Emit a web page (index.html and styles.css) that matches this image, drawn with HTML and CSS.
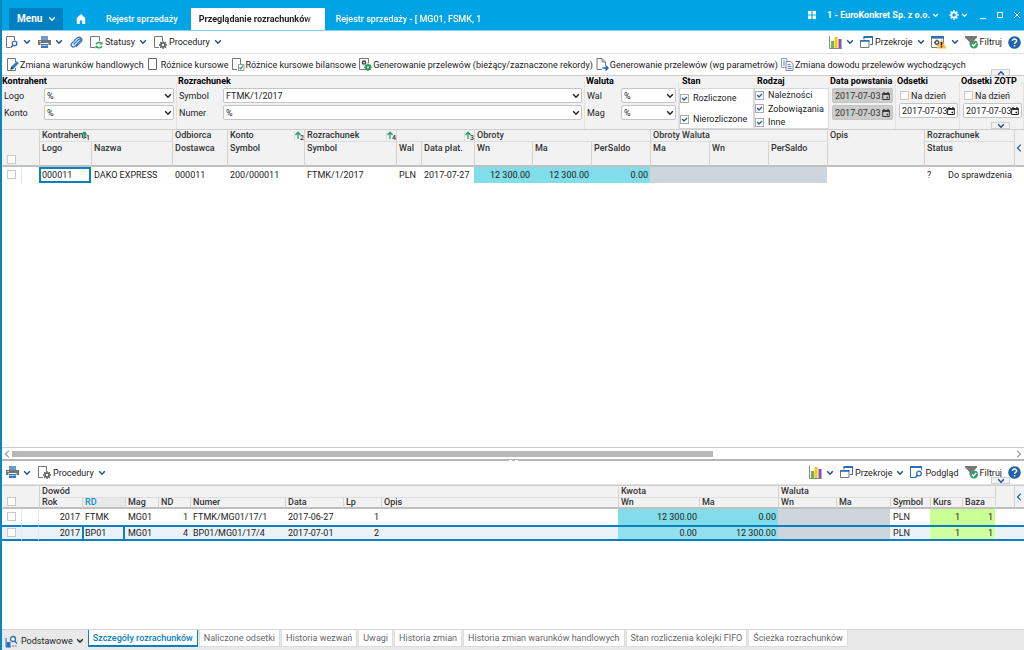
FILE: index.html
```html
<!DOCTYPE html>
<html lang="pl">
<head>
<meta charset="utf-8">
<title>Przeglądanie rozrachunków</title>
<link rel="stylesheet" href="styles.css">
</head>
<body>
<svg class="sprite" aria-hidden="true">
  <symbol id="chev" viewBox="0 0 8 6"><path d="M1.200 1.200 4 4.200 6.800 1.200" fill="none" stroke="currentColor" stroke-width="1.400"/></symbol>
  <symbol id="home" viewBox="0 0 10 10"><path d="M5 0 .8 4v6h3V6.500h2.400V10h3V4z" fill="currentColor"/></symbol>
  <symbol id="apps" viewBox="0 0 8 8"><path d="M0 0h3.400v3.400H0zM4.600 0H8v3.400H4.600zM0 4.600h3.400V8H0zM4.600 4.600H8V8H4.600z" fill="currentColor"/></symbol>
  <symbol id="gear" viewBox="0 0 10 10"><circle cx="5" cy="5" r="2.600" fill="none" stroke="currentColor" stroke-width="1.700"/><path d="M5 .3v1.500M5 8.200v1.500M.3 5h1.500M8.200 5h1.500M1.700 1.700l1 1M7.300 7.300l1 1M8.300 1.700l-1 1M2.700 7.300l-1 1" stroke="currentColor" stroke-width="1.700"/></symbol>
  <symbol id="page" viewBox="0 0 13 13"><path d="M1.500.5h8v11h-8z" fill="#fff" stroke="#666"/></symbol>
  <symbol id="preview" viewBox="0 0 13 13"><path d="M4.500 11.500h-4V.5h8V4" fill="#fff" stroke="#777"/><circle cx="8.500" cy="7.500" r="2.300" fill="#fff" stroke="#2a6db5" stroke-width="1.300"/><path d="M7 9.200 4.800 11.500" stroke="#2a6db5" stroke-width="1.600"/></symbol>
  <symbol id="printer" viewBox="0 0 13 13"><path d="M3 0h7v4H3z" fill="#6d9bd0"/><path d="M0 4h13v5H0z" fill="#707478"/><path d="M1.500 5h1.300v1H1.500z" fill="#fff"/><path d="M2.500 7h8v5h-8z" fill="#fff"/><path d="M3 8h7v4H3z" fill="#3e78bb"/><path d="M3.500 9.500h6" stroke="#a8c4e2"/></symbol>
  <symbol id="clip" viewBox="0 0 13 13"><path d="m3.500 8.500 5-5c1.300-1.200 2.600.2 1.500 1.300L4.800 10.300C2.800 12.200-.2 9.500 1.700 7.400l5.200-5.200C9.800-.5 13.500 3 11 5.800L6 10.900" fill="none" stroke="#2d6fb6" stroke-width="1.200"/></symbol>
  <symbol id="status" viewBox="0 0 13 13"><path d="M5 11.500H.5V.5h9V5" fill="#fff" stroke="#777"/><path d="M6 8.300C7 6 10 6 11.300 7.500M12 10c-1 2.400-4 2.400-5.500.8" fill="none" stroke="#2aa065" stroke-width="1.400"/><path d="M12.500 5.500v3h-3zM5.500 12.800v-3h3z" fill="#2aa065"/></symbol>
  <symbol id="proc" viewBox="0 0 13 13"><path d="M5 11.500H.5V.5h8V5" fill="#fff" stroke="#777"/><circle cx="9" cy="9" r="2" fill="#fff" stroke="#555" stroke-width="1.500"/><path d="M9 5v1.400M9 11.600V13M5 9h1.400M11.600 9H13M6.200 6.200l1 1M10.800 10.800l1 1M11.800 6.200l-1 1M7.200 10.800l-1 1" stroke="#555" stroke-width="1.300"/></symbol>
  <symbol id="pencil" viewBox="0 0 13 13"><path d="M9.500 10v2.500h-8V.5h8V4" fill="#fff" stroke="#777"/><path d="m4.500 11.500.6-2.800 5.700-5.500 2 2-5.600 5.700z" fill="#2d79c7"/><path d="m4.500 11.500.6-2.800 2.100 2.200z" fill="#234"/></symbol>
  <symbol id="pagecheck" viewBox="0 0 13 13"><path d="M5 11.500H.5V.5h8V6" fill="#fff" stroke="#777"/><path d="M6.500 6.500h5.500v6H6.500z" fill="#fff" stroke="#999"/><path d="m7.500 9.500 1.300 1.300 2.200-3" fill="none" stroke="#2aa065" stroke-width="1.300"/></symbol>
  <symbol id="gen" viewBox="0 0 13 13"><path d="M6 11.500H.5V.5h9V5" fill="#f7f7f7" stroke="#777"/><circle cx="5" cy="4.500" r="1.600" fill="#fff" stroke="#444" stroke-width="1.500"/><circle cx="9" cy="9.300" r="2" fill="#fff" stroke="#2a9a62" stroke-width="2"/><path d="M9 5.500v1.500M9 11.500v1.500M5.200 9.300h1.500M11.300 9.300h1.500M6.400 6.700l1 1M10.600 10.900l1 1M11.600 6.700l-1 1M7.400 10.900l-1 1" stroke="#2a9a62" stroke-width="1.400"/></symbol>
  <symbol id="export" viewBox="0 0 13 13"><path d="M6 11.500H1V.5h5L9.500 4v3M6 .5V4h3.500" fill="#fff" stroke="#777"/><path d="M6.500 10h5M9.500 7.500l2.500 2.500-2.500 2.500" fill="none" stroke="#1f62b5" stroke-width="1.400"/></symbol>
  <symbol id="copy" viewBox="0 0 13 13"><path d="M.5.500h5.500v9H.5z" fill="#fff" stroke="#99a"/><path d="M5 3.500h4.500l2.500 2v7H5z" fill="#fff" stroke="#889"/><path d="M2 3h2M2 5h2M2 7h2M6.500 6.500h3M6.500 8.500h4M6.500 10.500h4" stroke="#5a90cc"/></symbol>
  <symbol id="chart" viewBox="0 0 13 13"><path d="M.5 0v12.500H13" fill="none" stroke="#888"/><path d="M2 5h3v7H2z" fill="#6db35a"/><path d="M5.500 1h3v11h-3z" fill="#fdc20a"/><path d="M9.500 3h3v9h-3z" fill="#8252b5"/></symbol>
  <symbol id="sections" viewBox="0 0 13 13"><path d="M4 3.500V1h8.500v7.500H10" fill="#fff" stroke="#2d6fb6"/><path d="M3.500 1h9.500" stroke="#2d6fb6" stroke-width="2"/><path d="M.5 4.500h8.500v7H.5z" fill="#fff" stroke="#777"/><path d="M0 5h9.500" stroke="#2d6fb6" stroke-width="1.600"/></symbol>
  <symbol id="warn" viewBox="0 0 16 13"><path d="M.5.500h12v11H.5z" fill="#fff" stroke="#777"/><path d="M0 1.300h13" stroke="#2d6fb6" stroke-width="2.600"/><circle cx="6" cy="6.500" r="1.800" fill="#fff" stroke="#555" stroke-width="1.400"/><path d="M6 3.500v1M6 8.500v1M3 6.500h1" stroke="#555"/><path d="m10.500 3 5 9.500H5.500z" fill="#f8bd4c"/><path d="M10.500 6v3.500M10.500 10.300v1.200" stroke="#222" stroke-width="1.500"/></symbol>
  <symbol id="funnel" viewBox="0 0 13 13"><path d="M0 0h12v1.500L7.500 6v5L4.500 9V6L0 1.500z" fill="#777"/><circle cx="9" cy="8.500" r="3.900" fill="#3a9b6d"/><path d="m7 8.500 1.500 1.500L11.200 7" fill="none" stroke="#fff" stroke-width="1.300"/></symbol>
  <symbol id="look" viewBox="0 0 13 13"><path d="M5 11.500H.5V.5h11V4" fill="#fff" stroke="#2d6fb6"/><path d="M0 1.200h12" stroke="#2d6fb6" stroke-width="1.600"/><circle cx="9" cy="7.500" r="2.300" fill="#fff" stroke="#2d6fb6" stroke-width="1.300"/><path d="M7.400 9.200 5.300 11.600" stroke="#2d6fb6" stroke-width="1.600"/></symbol>
  <symbol id="help" viewBox="0 0 13 13"><circle cx="6.500" cy="6.500" r="6.300" fill="#1f62ad"/><path d="M4.400 5c0-2.700 4.300-2.500 4.200-.1 0 1.400-2 1.300-2 3M6.500 9v1.500" fill="none" stroke="#fff" stroke-width="1.500"/></symbol>
  <symbol id="cal" viewBox="0 0 8 8"><path d="M.7 1.500h6.600v6H.7z" fill="none" stroke="currentColor"/><path d="M.5 2.200h7" stroke="currentColor" stroke-width="1.400"/><path d="M2 0v2M6 0v2M4.500 5.500H6" stroke="currentColor" stroke-width="1.300"/></symbol>
  <symbol id="sort" viewBox="0 0 6 8"><path d="M3 8V1.500M.5 4 3 1.300 5.500 4" fill="none" stroke="#22a06b" stroke-width="1.300"/></symbol>
  <symbol id="base" viewBox="0 0 12 13"><path d="M.5 3v9h5" fill="none" stroke="#2d6fb6"/><path d="M1 7h4v5H1z" fill="#2d6fb6"/><path d="M6.500 10h2v2h-2zM9.500 10h1.500v2H9.500z" fill="#aaa"/><circle cx="7.500" cy="4" r="2.500" fill="#fff" stroke="#2d6fb6" stroke-width="1.300"/><path d="m9 6 2.500 2.500" stroke="#2d6fb6" stroke-width="1.400"/></symbol>
  <symbol id="left" viewBox="0 0 6 8"><path d="M4.800.7 1.500 4l3.300 3.300" fill="none" stroke="currentColor" stroke-width="1.200"/></symbol>
</svg>

<div class="app">
  <header class="topbar">
    <nav class="tabs">
      <button class="menu">Menu <svg class="chev"><use href="#chev"/></svg></button>
      <a class="home" href="#" aria-label="Start"><svg class="ic10"><use href="#home"/></svg></a>
      <a class="tab" href="#">Rejestr sprzedaży</a>
      <a class="tab current" href="#"><span class="fade">Przeglądanie rozrachunków</span></a>
      <a class="tab last" href="#"><span class="fade">Rejestr sprzedaży - [ MG01, FSMK, 1</span></a>
    </nav>
    <div class="account">
      <button class="plain" aria-label="Aplikacje"><svg class="ic8"><use href="#apps"/></svg></button>
      <button class="plain company">1 - EuroKonkret Sp. z o.o. <svg class="chev-s"><use href="#chev"/></svg></button>
      <button class="plain gear" aria-label="Ustawienia"><svg class="ic10"><use href="#gear"/></svg><svg class="chev-s"><use href="#chev"/></svg></button>
      <div class="window">
        <button class="plain" aria-label="Minimalizuj"><svg class="ic8" viewBox="0 0 8 8"><path d="M1 7.500h6" stroke="#fff"/></svg></button>
        <button class="plain" aria-label="Maksymalizuj"><svg class="ic8" viewBox="0 0 8 8"><path d="M1.500 1.500h5v5h-5z" fill="none" stroke="#fff"/></svg></button>
        <button class="plain" aria-label="Zamknij"><svg class="ic8" viewBox="0 0 8 8"><path d="m1 1 6 6M7 1 1 7" stroke="#fff"/></svg></button>
      </div>
    </div>
  </header>

  <div class="toolbar">
    <button class="tool"><svg class="ic"><use href="#preview"/></svg><svg class="chev gap"><use href="#chev"/></svg></button>
    <button class="tool"><svg class="ic"><use href="#printer"/></svg><svg class="chev gap"><use href="#chev"/></svg></button>
    <button class="tool" aria-label="Załączniki"><svg class="ic"><use href="#clip"/></svg></button>
    <button class="tool"><svg class="ic"><use href="#status"/></svg>Statusy<svg class="chev"><use href="#chev"/></svg></button>
    <button class="tool"><svg class="ic"><use href="#proc"/></svg>Procedury<svg class="chev"><use href="#chev"/></svg></button>
    <div class="right">
      <button class="tool"><svg class="ic"><use href="#chart"/></svg><svg class="chev"><use href="#chev"/></svg></button>
      <button class="tool"><svg class="ic"><use href="#sections"/></svg>Przekroje<svg class="chev"><use href="#chev"/></svg></button>
      <button class="tool"><svg class="ic16"><use href="#warn"/></svg><svg class="chev gap"><use href="#chev"/></svg></button>
      <button class="tool"><svg class="ic"><use href="#funnel"/></svg>Filtruj</button>
      <button class="tool" aria-label="Pomoc"><svg class="ic"><use href="#help"/></svg></button>
    </div>
  </div>

  <div class="toolbar actions">
    <button class="tool"><svg class="ic"><use href="#pencil"/></svg>Zmiana warunków handlowych</button>
    <button class="tool"><svg class="ic"><use href="#page"/></svg>Różnice kursowe</button>
    <button class="tool"><svg class="ic"><use href="#pagecheck"/></svg>Różnice kursowe bilansowe</button>
    <button class="tool"><svg class="ic"><use href="#gen"/></svg>Generowanie przelewów (bieżący/zaznaczone rekordy)</button>
    <button class="tool"><svg class="ic"><use href="#export"/></svg>Generowanie przelewów (wg parametrów)</button>
    <button class="tool"><svg class="ic"><use href="#copy"/></svg>Zmiana dowodu przelewów wychodzących</button>
  </div>

  <form class="filters">
    <button type="button" class="fold up" aria-label="Zwiń pasek"><svg class="chev"><use href="#chev"/></svg></button>
    <button type="button" class="fold down" aria-label="Rozwiń filtry"><svg class="chev"><use href="#chev"/></svg></button>
    <fieldset class="group kontrahent">
      <legend>Kontrahent</legend>
      <div class="field"><label for="logo">Logo</label><select id="logo"><option>%</option></select></div>
      <div class="field"><label for="konto">Konto</label><select id="konto"><option>%</option></select></div>
    </fieldset>
    <fieldset class="group rozrachunek">
      <legend>Rozrachunek</legend>
      <div class="field"><label for="symbol">Symbol</label><select id="symbol"><option>FTMK/1/2017</option></select></div>
      <div class="field"><label for="numer">Numer</label><select id="numer"><option>%</option></select></div>
    </fieldset>
    <fieldset class="group waluta">
      <legend>Waluta</legend>
      <div class="field"><label for="wal">Wal</label><select id="wal"><option>%</option></select></div>
      <div class="field"><label for="mag">Mag</label><select id="mag"><option>%</option></select></div>
    </fieldset>
    <fieldset class="group checks">
      <legend>Stan</legend>
      <div class="box roomy">
        <label><input type="checkbox" checked>Rozliczone</label>
        <label><input type="checkbox" checked>Nierozliczone</label>
      </div>
    </fieldset>
    <fieldset class="group checks">
      <legend>Rodzaj</legend>
      <div class="box">
        <label><input type="checkbox" checked>Należności</label>
        <label><input type="checkbox" checked>Zobowiązania</label>
        <label><input type="checkbox" checked>Inne</label>
      </div>
    </fieldset>
    <fieldset class="group powstanie">
      <legend>Data powstania</legend>
      <div class="date off"><input type="text" aria-label="Data od" value="2017-07-03" disabled><svg class="ic8"><use href="#cal"/></svg></div>
      <div class="date off"><input type="text" aria-label="Data do" value="2017-07-03" disabled><svg class="ic8"><use href="#cal"/></svg></div>
    </fieldset>
    <fieldset class="group odsetki">
      <legend>Odsetki</legend>
      <label class="day"><input type="checkbox">Na dzień</label>
      <div class="date"><input type="text" aria-label="Odsetki na dzień" value="2017-07-03"><svg class="ic8"><use href="#cal"/></svg></div>
    </fieldset>
    <fieldset class="group odsetki">
      <legend>Odsetki ZOTP</legend>
      <label class="day"><input type="checkbox">Na dzień</label>
      <div class="date"><input type="text" aria-label="Odsetki ZOTP na dzień" value="2017-07-03"><svg class="ic8"><use href="#cal"/></svg></div>
    </fieldset>
  </form>

  <main class="pane main-pane">
    <table class="grid main-grid">
      <colgroup><col class="w20"><col class="w17"><col class="w52"><col class="w81"><col class="w55"><col class="w77"><col class="w92"><col class="w25"><col class="w53"><col class="w58"><col class="w59"><col class="w59"><col class="w59"><col class="w59"><col class="w59"><col><col class="w21"><col class="w69"><col class="w10"></colgroup>
      <thead>
        <tr>
          <th colspan="2" rowspan="2" class="pick"><input type="checkbox" aria-label="Zaznacz wszystkie"></th>
          <th colspan="2"><div class="head first">Kontrahent<span class="sort"><svg><use href="#sort"/></svg><sub>1</sub></span></div></th>
          <th>Odbiorca</th>
          <th><div class="head">Konto<span class="sort"><svg><use href="#sort"/></svg><sub>2</sub></span></div></th>
          <th><div class="head">Rozrachunek<span class="sort"><svg><use href="#sort"/></svg><sub>4</sub></span></div></th>
          <th colspan="2"><div class="head"><span class="sort"><svg><use href="#sort"/></svg><sub>3</sub></span></div></th>
          <th colspan="3">Obroty</th>
          <th colspan="3">Obroty Waluta</th>
          <th>Opis</th>
          <th colspan="2">Rozrachunek</th>
          <th rowspan="2" class="more"><svg class="left"><use href="#left"/></svg></th>
        </tr>
        <tr>
          <th>Logo</th><th>Nazwa</th><th class="joined">Dostawca</th><th class="joined">Symbol</th><th>Symbol</th><th>Wal</th><th>Data płat.</th><th>Wn</th><th>Ma</th><th>PerSaldo</th><th>Ma</th><th>Wn</th><th>PerSaldo</th><th class="joined"></th><th colspan="2">Status</th>
        </tr>
      </thead>
      <tbody>
        <tr>
          <td class="pick line"><input type="checkbox" aria-label="Zaznacz 000011"></td><td></td><td class="focus">000011</td><td>DAKO EXPRESS</td><td>000011</td><td>200/000011</td><td>FTMK/1/2017</td><td>PLN</td><td>2017-07-27</td><td class="num cyan">12 300.00</td><td class="num cyan">12 300.00</td><td class="num cyan">0.00</td><td class="gray"></td><td class="gray"></td><td class="gray"></td><td></td><td>?</td><td>Do sprawdzenia</td><td></td>
        </tr>
      </tbody>
    </table>
  </main>
  <div class="scroll"><svg class="left"><use href="#left"/></svg><div class="track"><div class="thumb"></div></div><svg class="left flip"><use href="#left"/></svg></div>
  <div class="splitter"><span></span></div>

  <div class="toolbar lower">
    <button class="tool"><svg class="ic"><use href="#printer"/></svg><svg class="chev gap"><use href="#chev"/></svg></button>
    <button class="tool"><svg class="ic"><use href="#proc"/></svg>Procedury<svg class="chev"><use href="#chev"/></svg></button>
    <div class="right">
      <button class="tool"><svg class="ic"><use href="#chart"/></svg><svg class="chev"><use href="#chev"/></svg></button>
      <button class="tool"><svg class="ic"><use href="#sections"/></svg>Przekroje<svg class="chev"><use href="#chev"/></svg></button>
      <button class="tool"><svg class="ic"><use href="#look"/></svg>Podgląd</button>
      <button class="tool"><svg class="ic"><use href="#funnel"/></svg>Filtruj</button>
      <button class="tool" aria-label="Pomoc"><svg class="ic"><use href="#help"/></svg></button>
    </div>
    <button class="fold down" aria-label="Rozwiń"><svg class="chev"><use href="#chev"/></svg></button>
  </div>

  <section class="pane detail-pane">
    <table class="grid detail">
      <colgroup><col class="w20"><col class="w17"><col class="w43"><col class="w43"><col class="w33"><col class="w32"><col class="w95"><col class="w58"><col class="w38"><col><col class="w81"><col class="w79"><col class="w58"><col class="w54"><col class="w40"><col class="w32"><col class="w33"><col class="w19"><col class="w10"></colgroup>
      <thead>
        <tr>
          <th colspan="2" rowspan="2" class="pick"><input type="checkbox" aria-label="Zaznacz wszystkie"></th>
          <th colspan="8">Dowód</th><th colspan="2">Kwota</th><th colspan="5">Waluta</th><th rowspan="2"></th>
          <th rowspan="2" class="more"><svg class="left"><use href="#left"/></svg></th>
        </tr>
        <tr>
          <th>Rok</th><th class="blue">RD</th><th>Mag</th><th>ND</th><th>Numer</th><th>Data</th><th>Lp</th><th>Opis</th><th>Wn</th><th>Ma</th><th>Wn</th><th>Ma</th><th>Symbol</th><th>Kurs</th><th>Baza</th>
        </tr>
      </thead>
      <tbody>
        <tr>
          <td class="pick line"><input type="checkbox" aria-label="Zaznacz FTMK"></td><td class="line"></td><td class="num">2017</td><td>FTMK</td><td>MG01</td><td class="num">1</td><td>FTMK/MG01/17/1</td><td>2017-06-27</td><td class="num">1</td><td></td><td class="num cyan">12 300.00</td><td class="num cyan">0.00</td><td class="gray"></td><td class="gray"></td><td>PLN</td><td class="num green">1</td><td class="num green">1</td><td></td><td></td>
        </tr>
        <tr class="active">
          <td class="pick line"><input type="checkbox" aria-label="Zaznacz BP01"></td><td class="line"></td><td class="num">2017</td><td class="focus">BP01</td><td>MG01</td><td class="num">4</td><td>BP01/MG01/17/4</td><td>2017-07-01</td><td class="num">2</td><td></td><td class="num cyan">0.00</td><td class="num cyan">12 300.00</td><td class="gray"></td><td class="gray"></td><td>PLN</td><td class="num green">1</td><td class="num green">1</td><td></td><td></td>
        </tr>
      </tbody>
    </table>
  </section>

  <footer class="bottom">
    <button class="view"><svg class="ic"><use href="#base"/></svg>Podstawowe <svg class="chev"><use href="#chev"/></svg></button>
    <button class="sheet on">Szczegóły rozrachunków</button>
    <button class="sheet">Naliczone odsetki</button>
    <button class="sheet">Historia wezwań</button>
    <button class="sheet">Uwagi</button>
    <button class="sheet">Historia zmian</button>
    <button class="sheet">Historia zmian warunków handlowych</button>
    <button class="sheet">Stan rozliczenia kolejki FIFO</button>
    <button class="sheet">Ścieżka rozrachunków</button>
  </footer>
</div>
</body>
</html>
```
FILE: styles.css
```css
* { box-sizing: border-box; }
body { margin: 0; font: 9px/12px Roboto, "Noto Sans", sans-serif; color: #222; background: #fff; }
button, input, select { font: inherit; color: inherit; margin: 0; }
button { border: 0; background: none; padding: 0; cursor: pointer; white-space: nowrap; }
a { color: inherit; text-decoration: none; }
svg { flex: none; display: block; }
.sprite { position: absolute; width: 0; height: 0; }
.app { min-height: 100vh; display: flex; flex-direction: column; border-left: 2px solid #0a86bd; }

.ic { width: 13px; height: 13px; }
.ic16 { width: 16px; height: 13px; }
.ic10 { width: 10px; height: 10px; }
.ic8 { width: 8px; height: 8px; }
.chev { width: 8px; height: 6px; color: #1d4f91; }
.chev-s { width: 7px; height: 5px; }
.chev.gap { margin-left: 2px; }
.left { width: 6px; height: 8px; color: #1d5f9f; }
.flip { transform: scaleX(-1); }

/* title bar */
.topbar { display: flex; justify-content: space-between; height: 31px; background: #00a4e4; color: #fff; border-bottom: 1px solid #7fd0f0; }
.tabs { display: flex; align-items: flex-end; padding-left: 7px; }
.menu { display: flex; align-items: center; gap: 6px; height: 22px; width: 54px; padding: 0 8px; background: #0080c2; font-size: 10px; font-weight: 700; }
.menu .chev { color: #fff; }
.home { display: flex; align-items: center; height: 22px; padding: 0 20px 0 13px; }
.tab { height: 22px; line-height: 22px; padding: 0 13px 0 0; font-weight: 500; white-space: nowrap; }
.tab.current { width: 134px; padding: 0 8px; background: #fff; color: #222; font-weight: 700; }
.tab.last { width: 170px; padding-left: 11px; }
.fade { display: block; overflow: hidden; mask-image: linear-gradient(to left, transparent, #000 12px); }
.tab.last .fade { width: 154px; }
.account { display: flex; align-items: center; font-weight: 700; }
.plain { display: flex; align-items: center; gap: 2px; font-weight: 700; }
.company { margin-left: 11px; }
.gear { margin-left: 10px; }
.window { display: flex; align-items: center; gap: 9px; height: 100%; margin-left: 5px; padding: 0 3px 0 5px; border-left: 1px solid #1499d2; }

/* toolbars */
.toolbar { position: relative; display: flex; align-items: center; gap: 7px; height: 23px; padding: 0 3px 0 4px; border-bottom: 1px solid #e2e2e2; }
.tool { display: flex; align-items: center; gap: 2px; }
.tool .chev { margin-left: 2px; }
.right { display: flex; gap: 6px; margin-left: auto; }
.actions { gap: 3px; height: 22px; border-bottom: 1px solid #ccc; }
.actions .tool { gap: 1px; }
.lower { height: 24px; }

.fold { position: absolute; right: 14px; display: grid; place-items: center; width: 19px; height: 7px; background: #f2f2f2; border: 1px solid #d0d0d0; z-index: 1; }
.fold.down { bottom: 0; }
.fold.up { top: -7px; }
.fold.up .chev { transform: rotate(180deg); }

/* filters */
.filters { position: relative; display: flex; height: 53px; background: #f2f2f2; }
.group { border: 0; margin: 0; padding: 0; min-width: 0; border-right: 1px solid #e2e2e2; }
.group legend { padding: 0 0 0 1px; height: 12px; line-height: 11px; font-weight: 700; white-space: nowrap; color: #000; }
.kontrahent { flex: 0 0 175px; }
.rozrachunek { flex: 1; }
.waluta { flex: 0 0 94px; }
.group.kontrahent legend { padding-left: 0; }
.kontrahent label { width: 42px; }
.rozrachunek label { width: 46px; }
.waluta label { width: 36px; }
.field { display: flex; align-items: center; padding: 0 2px 0 0; margin-bottom: 2px; }
.field label { flex: none; padding-left: 2px; }
select { flex: 1; min-width: 0; height: 15px; padding: 0 2px; border: 1px solid #c4c4c4; border-radius: 2px; appearance: none; background: #fff url("data:image/svg+xml,%3Csvg xmlns='http://www.w3.org/2000/svg' viewBox='0 0 8 6'%3E%3Cpath d='M1.200 1.200 4 4.200 6.800 1.200' fill='none' stroke='%23222' stroke-width='1.400'/%3E%3C/svg%3E") right 1px center / 8px 6px no-repeat; }
.checks { flex: 0 0 75px; border: 0; }
.group.checks legend { padding-left: 3px; }
.box { display: flex; flex-direction: column; justify-content: space-between; height: 41px; background: #fff; border: 1px solid #d8d8d8; }
.roomy { padding: 3px 0; }
.box label, .day { display: flex; align-items: center; gap: 4px; white-space: nowrap; }
input[type="checkbox"] { appearance: none; flex: none; display: block; width: 9px; height: 9px; border: 1px solid #c8c8c8; background: #fff; }
input[type="checkbox"]:checked { border-color: #aaa; background: #fff url("data:image/svg+xml,%3Csvg xmlns='http://www.w3.org/2000/svg' viewBox='0 0 7 7'%3E%3Cpath d='M1.200 3 3 5 6 2' fill='none' stroke='%231f5f9f' stroke-width='1.300'/%3E%3C/svg%3E") center / 7px 7px no-repeat; }
.powstanie { flex: 0 0 67px; padding-right: 2px; }
.odsetki { flex: 0 0 64px; padding-right: 1px; }
.date { display: flex; align-items: center; height: 15px; margin: 0 0 2px 3px; padding: 0 2px; background: #fff; border: 1px solid #c4c4c4; border-radius: 2px; }
.date input { flex: 1; min-width: 0; width: 0; height: 12px; padding: 0; border: 0; background: none; }
.date.off { background: #ccc; color: #333; }
.day { height: 15px; padding-left: 4px; gap: 2px; }

/* data grids */
.pane { flex: 1 0 auto; min-width: 0; }
.main-pane { flex-grow: 3; }
.grid { width: 100%; table-layout: fixed; border-collapse: separate; border-spacing: 0; }
.grid th, .grid td { padding: 0 2px; text-align: left; white-space: nowrap; overflow: hidden; vertical-align: top; }
.grid th { height: 12px; background: #f2f2f2; border-left: 1px solid #d4d4d4; border-top: 1px solid #ccc; line-height: 11px; font-weight: 500; color: #333; }
.grid th:first-child { border-left-color: transparent; }
.grid thead tr:last-child th { border-bottom: 2px solid #c0c0c0; border-top-color: #dcdcdc; height: 26px; line-height: 13px; }
.grid thead tr:last-child th.joined { border-top-color: transparent; }
.grid thead .pick, .grid thead tr:first-child th[rowspan] { vertical-align: bottom; padding-bottom: 1px; border-bottom: 2px solid #c0c0c0; }
.grid thead tr:last-child th:first-child { border-left-color: #d4d4d4; }
.grid.detail thead tr:last-child th { height: 12px; line-height: 9px; }
.grid thead .pick { padding-left: 4px; }
.grid td.pick { padding-left: 5px; }
.grid thead tr:first-child th.more { vertical-align: middle; padding: 0 1px; }
.head { position: relative; min-height: 11px; }
.head.first { width: 47px; }
.sort { position: absolute; right: -2px; top: 1px; display: flex; width: 10px; height: 11px; background: #f2f2f2; border-left: 1px solid #ddd; }
.sort svg { width: 6px; height: 8px; }
.sort sub { font-size: 7px; line-height: 14px; vertical-align: baseline; margin-left: -1px; }
.first .sort { background: none; border: 0; }
.grid td { height: 16px; line-height: 14px; padding-top: 1px; }
.grid td.pick { padding-top: 3px; }
.grid td.line { border-right: 1px solid #dcecf5; }
.grid td.num { text-align: right; }
.main-grid td, .detail td { padding-left: 3px; }
.cyan { background: #80dde9; }
.gray { background: #ced6dd; }
.green { background: #c9ff93; }
.grid .blue { color: #0a8fd0; background: #e9e9e9; }
.grid td.focus { border: 2px solid #0a80bf; line-height: 12px; padding: 0 1px; }
.grid .active td { border-top: 2px solid #0a80bf; border-bottom: 2px solid #0a80bf; height: 16px; line-height: 12px; padding-top: 0; }
.grid .active td.pick { padding-top: 1px; }
.active td { background-color: #eaf2f7; }
.active td.cyan { background: #92e1ec; }
.active td.gray { background: #ced6dd; }
.active td.green { background: #cfffa0; }

.scroll { display: flex; align-items: center; gap: 2px; height: 12px; padding: 0 2px; border-top: 1px solid #ccc; }
.scroll .left { color: #999; }
.track { flex: 1; }
.thumb { width: 70%; height: 6px; background: #b8b8b8; }
.splitter { display: flex; justify-content: center; align-items: center; height: 2px; background: #b5b5b5; }
.splitter span { width: 9px; border-top: 1px dashed #fff; }

/* sheets */
.bottom { display: flex; align-items: flex-start; gap: 1px; height: 21px; background: #e9e9e9; border-top: 1px solid #d5d5d5; }
.view { display: flex; align-items: center; gap: 3px; height: 20px; padding: 2px 3px 0; }
.view .chev { color: #222; }
.sheet { height: 17px; padding: 0 4px; background: #fff; color: #666; border: 1px solid #ddd; border-top: 0; }
.sheet.on { color: #0a80bf; border: 1px solid #0a80bf; border-top: 0; border-bottom-width: 2px; font-weight: 500; }

.w10 { width: 10px; } .w17 { width: 17px; } .w19 { width: 19px; } .w20 { width: 20px; } .w21 { width: 21px; }
.w25 { width: 25px; } .w32 { width: 32px; } .w33 { width: 33px; } .w38 { width: 38px; } .w40 { width: 40px; }
.w43 { width: 43px; } .w52 { width: 52px; } .w53 { width: 53px; } .w54 { width: 54px; } .w55 { width: 55px; }
.w58 { width: 58px; } .w59 { width: 59px; } .w69 { width: 69px; } .w77 { width: 77px; } .w79 { width: 79px; }
.w81 { width: 81px; } .w92 { width: 92px; } .w95 { width: 95px; }
```
